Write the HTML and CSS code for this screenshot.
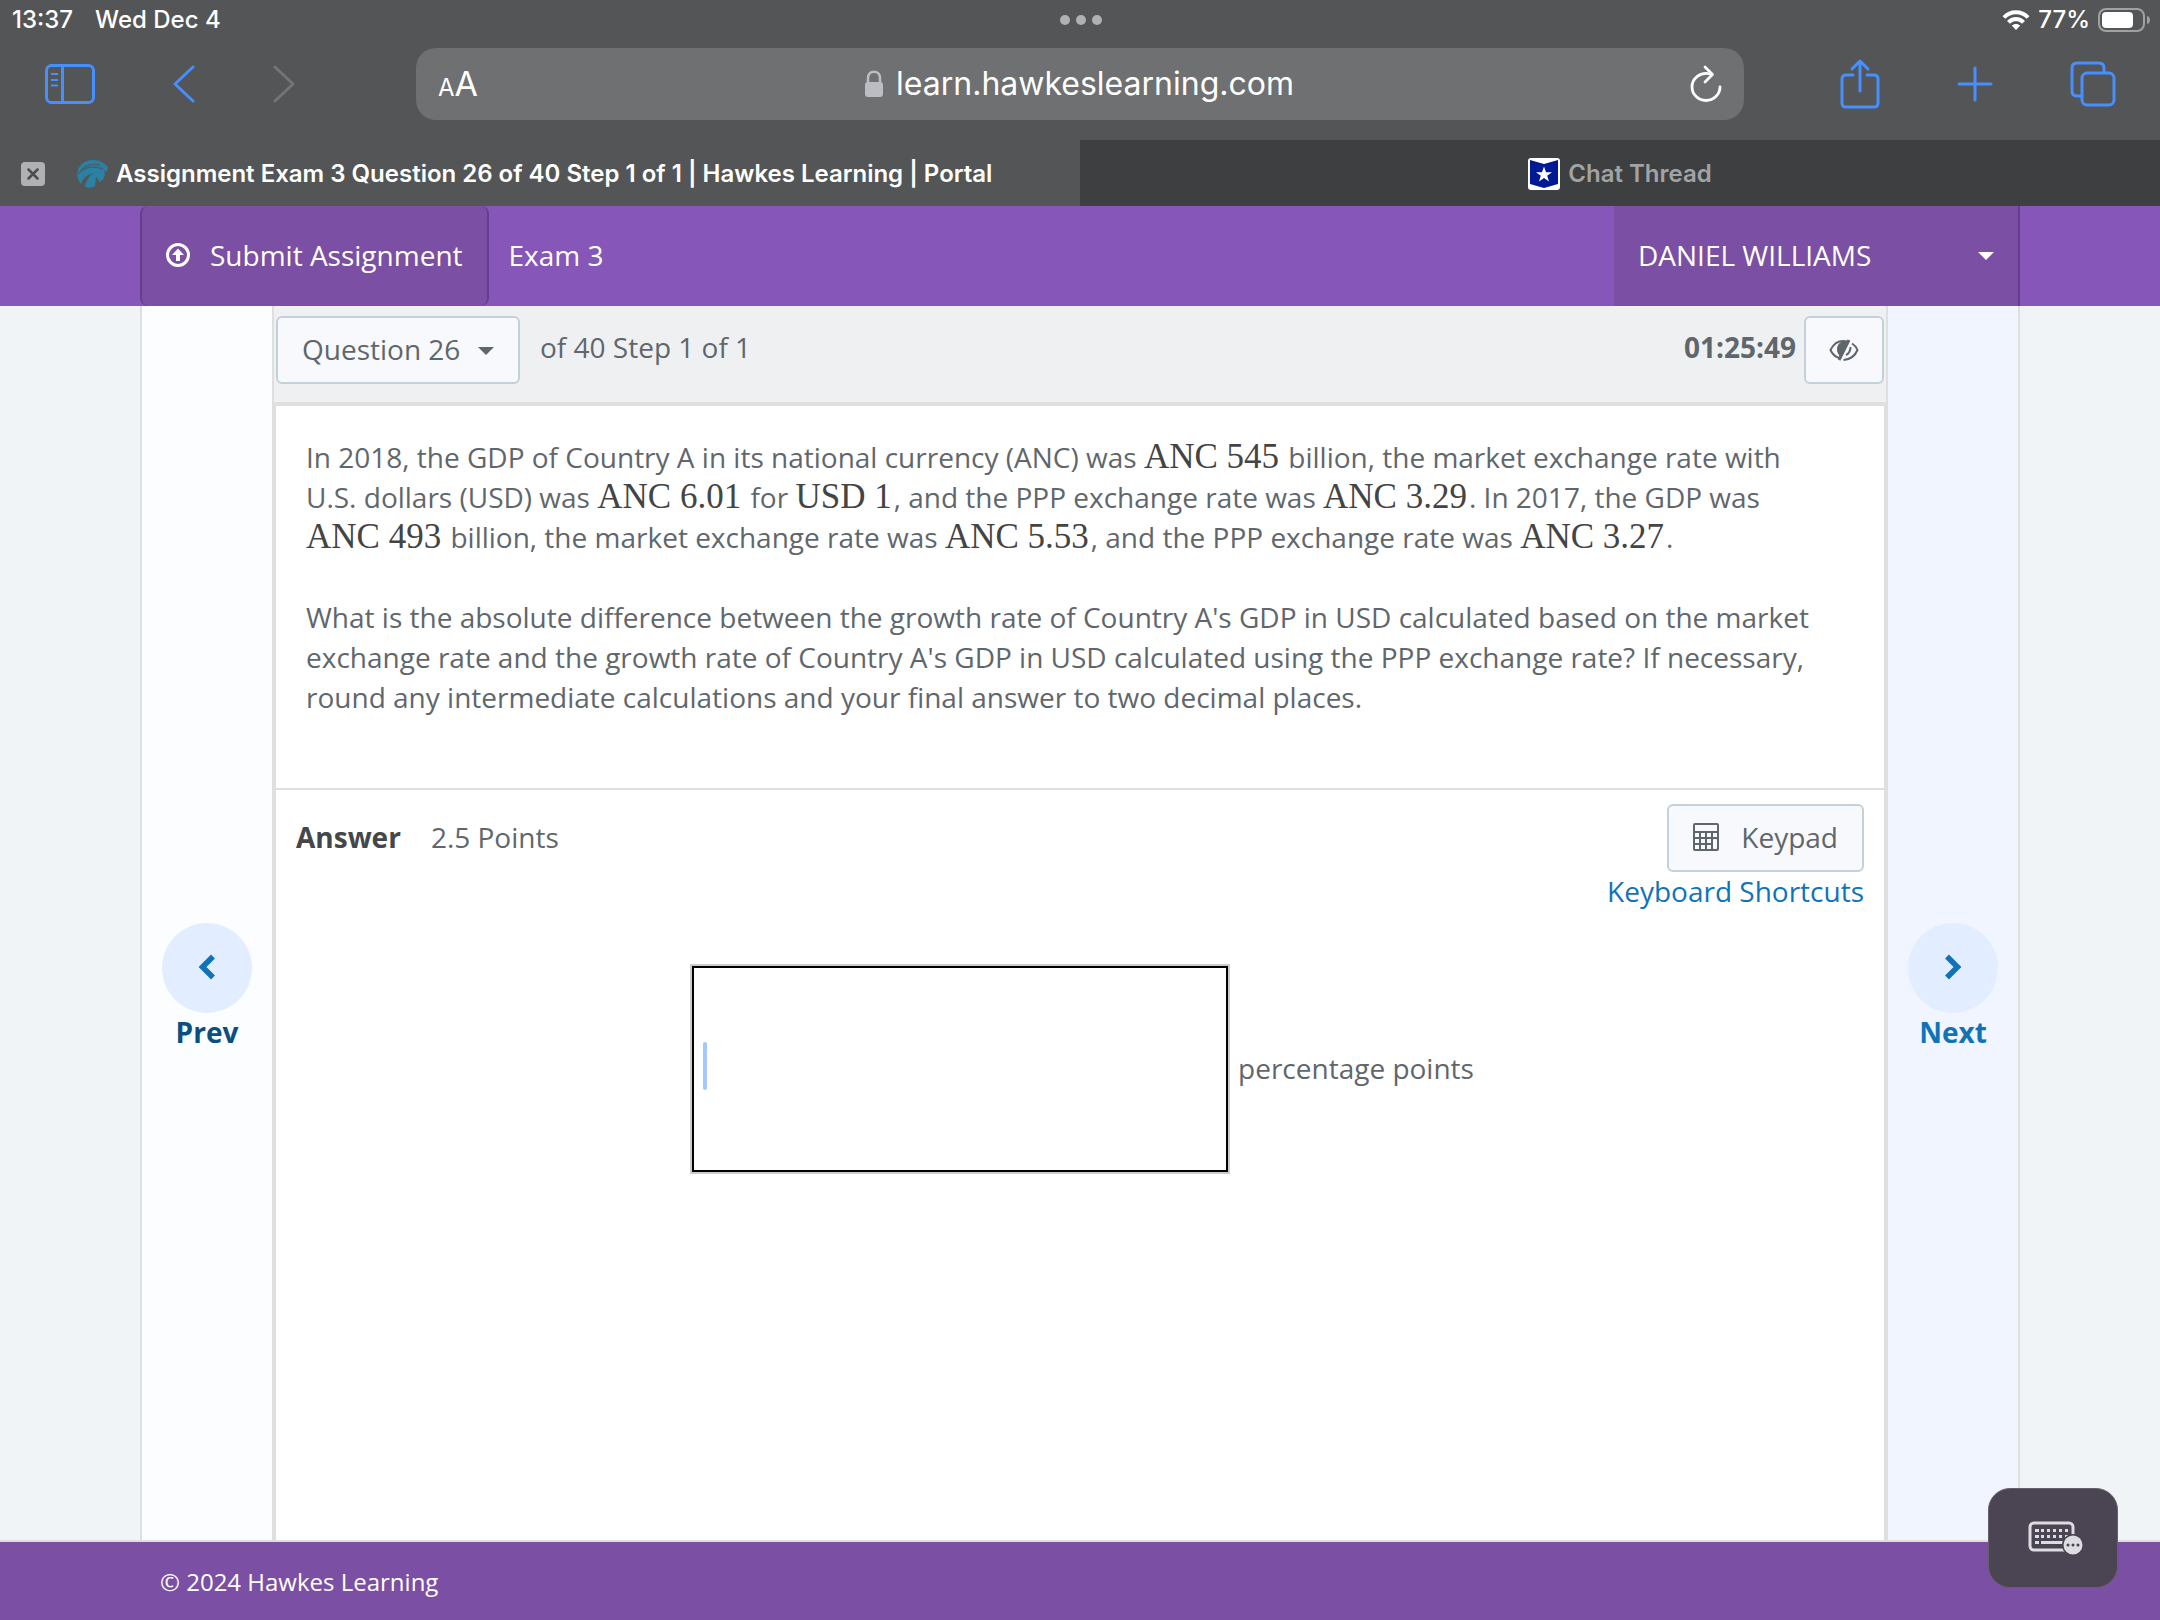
FILE: index.html
```
<!DOCTYPE html>
<html lang="en">
<head>
	<meta charset="UTF-8">
	<title>Assignment Exam 3 Question 26 of 40 Step 1 of 1 | Hawkes Learning | Portal</title>
	<link rel="stylesheet" href="styles.css">
</head>
<body>

	<!-- browser bar -->
	<div class="browser">
		<div class="status">
			<div class="status-left"><span>13:37</span><span>Wed Dec 4</span></div>
			<div class="dots"><i></i><i></i><i></i></div>
			<div class="status-right">
				<svg width="28" height="20" viewBox="0 0 28 20" fill="none" stroke="#fff" stroke-width="4"><path d="M2 7.5C8.500 0.500 19.500 0.500 26 7.500M6.500 12.300C10.500 8 17.500 8 21.500 12.300"/><path d="M14 20L9.800 15.600C12 13.500 16 13.500 18.200 15.600Z" fill="#fff" stroke="none"/></svg>
				<span>77%</span>
				<svg width="52" height="24" viewBox="0 0 52 24"><rect x="1" y="1" width="45" height="22" rx="7" fill="none" stroke="#a0a1a2" stroke-width="2"/><rect x="4" y="4" width="31" height="16" rx="4" fill="#fff"/><path d="M49 8C53 9 53 15 49 16Z" fill="#a0a1a2"/></svg>
			</div>
		</div>

		<div class="toolbar">
			<div class="tools tools-left">
				<button class="tool" aria-label="Sidebar"><svg width="50" height="40" viewBox="0 0 50 40" fill="none" stroke="#468ffd" stroke-width="3"><rect x="1.500" y="1.500" width="47" height="37" rx="5"/><path d="M17.500 2V38"/><path d="M6 10H13M6 16H13M6 21.500H13" stroke-width="2"/></svg></button>
				<button class="tool" aria-label="Back"><svg width="22" height="38" viewBox="0 0 22 38" fill="none" stroke="#468ffd" stroke-width="3" stroke-linecap="round" stroke-linejoin="round"><path d="M20 2L2 19L20 36"/></svg></button>
				<button class="tool" aria-label="Forward"><svg width="22" height="38" viewBox="0 0 22 38" fill="none" stroke="#737475" stroke-width="3" stroke-linecap="round" stroke-linejoin="round"><path d="M2 2L20 19L2 36"/></svg></button>
			</div>
			<div class="address">
				<button class="reader" aria-label="Page settings"><small>A</small>A</button>
				<div class="url">
					<svg width="20" height="28" viewBox="0 0 20 28"><path d="M4 13V8C4 -0.500 16 -0.500 16 8V13" fill="none" stroke="#bcbcc4" stroke-width="2.500"/><rect x="1" y="12" width="18" height="15" rx="3" fill="#bcbcc4"/></svg>
					<input type="text" value="learn.hawkeslearning.com" aria-label="Address">
				</div>
				<button class="tool" aria-label="Reload"><svg width="32" height="38" viewBox="0 0 32 38" fill="none" stroke="#fff" stroke-width="2.800" stroke-linecap="round" stroke-linejoin="round"><path d="M20.500 9C10 6.500 2 13.500 2 22C2 29.500 8.500 35.500 16 35.500C23.500 35.500 30 29.500 30 22"/><path d="M15 2L22.500 9.500L15 17"/></svg></button>
			</div>
			<div class="tools tools-right">
				<button class="tool" aria-label="Share"><svg width="40" height="50" viewBox="0 0 40 50" fill="none" stroke="#468ffd" stroke-width="3" stroke-linecap="round" stroke-linejoin="round"><path d="M13 16H6Q2 16 2 20V44Q2 48 6 48H34Q38 48 38 44V20Q38 16 34 16H27M20 32V2M12 10L20 2L28 10"/></svg></button>
				<button class="tool" aria-label="New tab"><svg width="36" height="36" viewBox="0 0 36 36" stroke="#468ffd" stroke-width="3" stroke-linecap="round"><path d="M18 2V34M2 18H34"/></svg></button>
				<button class="tool" aria-label="Show tabs"><svg width="46" height="46" viewBox="0 0 46 46" fill="none" stroke="#468ffd" stroke-width="3"><rect x="12" y="12" width="32" height="32" rx="5"/><path d="M12 35H7Q2 35 2 30V7Q2 2 7 2H29Q34 2 34 7V12"/></svg></button>
			</div>
		</div>

		<div class="tabs">
			<div class="tab tab-cur">
				<button class="close" aria-label="Close tab"><svg width="12" height="12" viewBox="0 0 12 12" stroke="#4b4c4d" stroke-width="2.500" stroke-linecap="round"><path d="M1.500 1.500L10.500 10.500M10.500 1.500L1.500 10.500"/></svg></button>
				<svg width="32" height="30" viewBox="0 0 32 30"><path d="M3 22C-2 12 5 1 17 1C24 1 28 4 32 8L31 13L28 11C30 16 28 21 24 23L20 18L19 27C16 29 12 29 9 28C10 22 13 17 17 14C10 16 6 21 5 25Z" fill="#2a80a5"/><path d="M2 15C8 8 18 6 27 10M5 11C11 5 17 4 24 6" fill="none" stroke="#45616c" stroke-width="1.500"/></svg>
				<a href="#">Assignment Exam 3 Question 26 of 40 Step 1 of 1 | Hawkes Learning | Portal</a>
			</div>
			<div class="tab">
				<svg width="32" height="32" viewBox="0 0 32 32"><rect width="32" height="32" rx="3" fill="#fff"/><path d="M2 2L16 6L30 2V26L16 30L2 26Z" fill="#001a96"/><path d="M16 8.500L18 14.200H24L19.200 17.700L21 23.500L16 20L11 23.500L12.800 17.700L8 14.200H14Z" fill="#fff"/></svg>
				<a href="#">Chat Thread</a>
			</div>
		</div>
	</div>

	<header class="header">
		<button class="submit">
			<svg width="24" height="24" viewBox="0 0 24 24"><circle cx="12" cy="12" r="10.500" fill="none" stroke="#fff" stroke-width="3"/><path d="M12 5.500L18 12H14V18H10V12H6Z" fill="#fff"/></svg>
			Submit Assignment
		</button>
		<span class="exam">Exam 3</span>
		<button class="user">DANIEL WILLIAMS <span class="caret"></span></button>
	</header>

	<div class="wrap">
		<nav class="side side-prev">
			<button class="step"><span class="circle"><svg width="18" height="26" viewBox="0 0 18 26" fill="none" stroke="#1173b7" stroke-width="5.500" stroke-linejoin="miter"><path d="M15 2.500L4.500 13L15 23.500"/></svg></span>Prev</button>
		</nav>

		<main class="main">
			<div class="question-bar">
				<div class="picker">
					<select aria-label="Question"><option>Question 26</option></select>
					<span class="caret"></span>
				</div>
				<span class="step-text">of 40 Step 1 of 1</span>
				<b class="timer">01:25:49</b>
				<button class="btn btn-eye" aria-label="Hide timer"><svg width="30" height="26" viewBox="0 0 30 26" fill="none" stroke="#5f676c" stroke-width="2"><path d="M10 21C6 19.500 3 16.500 1.500 13C5 6 11 3 18 4.500M23 6.500C25.500 8 27.500 10.500 28.500 13C26 19 21 22.500 14.500 23"/><path d="M20 3L10 23" stroke-width="3"/><path d="M17 5C9 5 7 12 11 18L17 5Z" fill="#5f676c"/><path d="M17 18C20 16.500 21.500 14 21.500 10"/></svg></button>
			</div>

			<div class="card">
				<section class="question">
					<p>In 2018, the GDP of Country A in its national currency (ANC) was <span class="math">ANC 545</span> billion, the market exchange rate with U.S. dollars (USD) was <span class="math">ANC 6.01</span> for <span class="math">USD 1</span>, and the PPP exchange rate was <span class="math">ANC 3.29</span>. In 2017, the GDP was <span class="math">ANC 493</span> billion, the market exchange rate was <span class="math">ANC 5.53</span>, and the PPP exchange rate was <span class="math">ANC 3.27</span>.</p>
					<p>What is the absolute difference between the growth rate of Country A's GDP in USD calculated based on the market exchange rate and the growth rate of Country A's GDP in USD calculated using the PPP exchange rate? If necessary, round any intermediate calculations and your final answer to two decimal places.</p>
				</section>
				<section class="answer">
					<div class="answer-head">
						<div class="points"><b>Answer</b><span>2.5 Points</span></div>
						<div class="keys">
							<button class="btn btn-keypad">
								<svg width="26" height="28" viewBox="0 0 26 28"><rect width="26" height="28" rx="2" fill="#5f676c"/><g fill="#f8f9fc"><rect x="2" y="2" width="22" height="6"/><path d="M2 10h4v4h-4zM8 10h4v4h-4zM14 10h4v4h-4zM20 10h4v4h-4zM2 16h4v4h-4zM8 16h4v4h-4zM14 16h4v4h-4zM2 22h4v4h-4zM8 22h4v4h-4zM14 22h4v4h-4z"/><rect x="20" y="16" width="4" height="10" rx="1"/></g></svg>
								Keypad
							</button>
							<a href="#">Keyboard Shortcuts</a>
						</div>
					</div>
					<div class="answer-row">
						<div class="field">
							<input type="text" id="answer">
							<span class="cursor"></span>
						</div>
						<label for="answer">percentage points</label>
					</div>
				</section>
			</div>
		</main>

		<nav class="side side-next">
			<button class="step"><span class="circle"><svg width="18" height="26" viewBox="0 0 18 26" fill="none" stroke="#1173b7" stroke-width="5.500" stroke-linejoin="miter"><path d="M3 2.500L13.500 13L3 23.500"/></svg></span>Next</button>
		</nav>
	</div>

	<footer class="footer">© 2024 Hawkes Learning</footer>

	<button class="keyboard" aria-label="Keyboard">
		<svg width="56" height="36" viewBox="0 0 56 36"><rect x="2" y="3" width="43" height="27" rx="4" fill="none" stroke="#dddce0" stroke-width="3"/><path d="M7 9h4v3h-4zM13 9h3v3h-3zM19 9h3v3h-3zM25 9h3v3h-3zM31 9h3v3h-3zM37 9h3v3h-3zM7 15h4v3h-4zM13 15h3v3h-3zM19 15h3v3h-3zM25 15h3v3h-3zM31 15h3v3h-3zM37 15h3v3h-3zM7 21h4v3h-4zM13 21h22v3h-22z" fill="#dddce0"/><circle cx="45" cy="25" r="11" fill="#4a4352"/><circle cx="45" cy="25" r="9.500" fill="#dddce0"/><g fill="#4a4352"><circle cx="40" cy="25" r="1.500"/><circle cx="45" cy="25" r="1.500"/><circle cx="50" cy="25" r="1.500"/></g></svg>
	</button>

</body>
</html>
```
FILE: styles.css
```
*{
	box-sizing: border-box;
}
body{
	margin: 0;
	min-height: 100vh;
	display: flex;
	flex-direction: column;
	background-color: #f0f4f7;
	font-family: "Open Sans","Noto Sans",sans-serif;
	font-size: 28px;
	line-height: 40px;
	color: #5f676c;
}
button,input,select{
	margin: 0;
	padding: 0;
	border: none;
	outline: none;
	background: none;
	font: inherit;
	color: inherit;
}
button{
	cursor: pointer;
}
a{
	text-decoration: none;
	color: #1173b7;
}
svg{
	display: block;
	flex: none;
}

/* browser bar */
.browser{
	background-color: #545556;
	color: #fff;
	font-family: Inter,"Liberation Sans",sans-serif;
}
.status{
	display: grid;
	grid-template-columns: 1fr auto 1fr;
	align-items: center;
	height: 40px;
	padding: 0 10px 0 12px;
	font-size: 24px;
	font-weight: 500;
}
.status-left,.status-right{
	display: flex;
	align-items: center;
}
.status-left{
	gap: 22px;
}
.status-right{
	justify-content: flex-end;
	gap: 8px;
}
.dots{
	display: flex;
	gap: 6px;
}
.dots i{
	width: 10px;
	height: 10px;
	border-radius: 50%;
	background-color: #b0b1b2;
}
.toolbar{
	display: grid;
	grid-template-columns: 416px 1fr 416px;
	align-items: center;
	height: 100px;
	padding-bottom: 12px;
}
.tools{
	display: flex;
	align-items: center;
}
.tools-left{
	gap: 78px;
	padding-left: 45px;
}
.tools-right{
	justify-content: space-between;
	padding: 0 44px 0 96px;
}
.address{
	display: flex;
	align-items: center;
	justify-content: space-between;
	height: 72px;
	padding: 0 22px;
	border-radius: 20px;
	background-color: #6f7071;
}
.reader{
	padding-top: 4px;
	font-size: 34px;
}
.reader small{
	font-size: 24px;
}
.url{
	display: flex;
	align-items: center;
	gap: 12px;
	font-size: 32px;
}
.url input{
	width: 408px;
}
.tabs{
	display: grid;
	grid-template-columns: 1fr 1fr;
	height: 66px;
}
.tab{
	display: flex;
	align-items: center;
	justify-content: center;
	gap: 8px;
	padding-top: 2px;
	background-color: #3e3f40;
	font-size: 24px;
	font-weight: 600;
}
.tab a{
	color: #a2a3a4;
}
.tab-cur{
	justify-content: flex-start;
	padding-left: 21px;
	background-color: #545556;
}
.tab-cur a{
	color: #fff;
}
.close{
	display: flex;
	align-items: center;
	justify-content: center;
	width: 24px;
	height: 24px;
	margin-right: 23px;
	border-radius: 4px;
	background-color: #b0b1b2;
}

/* header */
.header{
	display: flex;
	align-items: center;
	height: 100px;
	padding: 0 140px;
	background-color: #8656b8;
	color: #fff;
}
.submit{
	display: flex;
	align-items: center;
	gap: 20px;
	height: 100%;
	padding: 0 24px 2px;
	border: 2px solid #643f87;
	border-top: none;
	border-bottom: none;
	border-radius: 8px;
	background-color: #7b4fa3;
}
.exam{
	margin-left: 20px;
	padding-bottom: 2px;
}
.user{
	display: flex;
	align-items: center;
	justify-content: space-between;
	width: 406px;
	height: 100%;
	margin-left: auto;
	padding: 0 24px 2px;
	border-right: 2px solid #643f87;
	background-color: #7b4fa3;
}
.caret{
	margin-top: 2px;
	border-top: 8px solid;
	border-left: 8px solid transparent;
	border-right: 8px solid transparent;
}

/* page */
.wrap{
	flex: 1;
	display: flex;
	padding: 0 140px;
}
.side{
	display: flex;
	align-items: center;
	justify-content: center;
	width: 132px;
}
.side-prev{
	border-left: 2px solid #dfdfdf;
	background-color: #fcfdff;
}
.side-next{
	border-right: 2px solid #dfdfdf;
	background-color: #f1f5ff;
}
.step{
	display: flex;
	flex-direction: column;
	align-items: center;
	padding-top: 128px;
	font-weight: bold;
	line-height: 38px;
	color: #1173b7;
}
.side-prev .step{
	color: #0b4f7d;
}
.circle{
	display: flex;
	align-items: center;
	justify-content: center;
	width: 90px;
	height: 90px;
	padding-bottom: 2px;
	border-radius: 50%;
	background-color: #e2eeff;
}
.main{
	flex: 1;
	display: flex;
	flex-direction: column;
}
.question-bar{
	display: flex;
	align-items: flex-start;
	height: 96px;
	padding: 10px 2px 0;
	border-left: 2px solid #dfdfdf;
	border-right: 2px solid #dfdfdf;
	background-color: #eff0f2;
}
.btn,.picker{
	display: flex;
	align-items: center;
	justify-content: center;
	height: 68px;
	border: 2px solid #c3d2da;
	border-radius: 6px;
	background-color: #f8f9fc;
}
.picker{
	position: relative;
	width: 244px;
}
.picker select{
	width: 100%;
	height: 100%;
	padding: 0 0 2px 24px;
	appearance: none;
}
.picker .caret{
	position: absolute;
	right: 24px;
	pointer-events: none;
}
.step-text{
	margin-left: 20px;
	line-height: 62px;
}
.timer{
	margin-left: auto;
	margin-right: 8px;
	line-height: 62px;
}
.btn-eye{
	width: 80px;
}
.card{
	flex: 1;
	border: 4px solid #dfdfdf;
	border-bottom: none;
	background-color: #fff;
}
.question{
	padding: 31px 60px 31px 30px;
	border-bottom: 2px solid #dfdfdf;
}
.question p{
	margin: 0 0 40px;
}
.math{
	margin-right: 2px;
	font-family: "Liberation Serif",serif;
	font-size: 35px;
	line-height: 36px;
	white-space: nowrap;
	color: #444;
}
.answer{
	padding: 14px 20px 40px;
}
.answer-head{
	display: flex;
	justify-content: space-between;
}
.points{
	display: flex;
	gap: 30px;
	line-height: 66px;
}
.points b{
	color: #43474a;
}
.keys{
	display: flex;
	flex-direction: column;
	align-items: flex-end;
	line-height: 38px;
}
.btn-keypad{
	gap: 22px;
	padding: 0 24px 2px;
}
.answer-row{
	display: flex;
	align-items: center;
	justify-content: center;
	gap: 8px;
	margin-top: 54px;
	padding-left: 4px;
}
.answer-row label{
	padding-bottom: 2px;
}
.field{
	position: relative;
	width: 540px;
}
.field input{
	display: block;
	width: 100%;
	height: 210px;
	padding: 0 12px;
	border: 2px solid #ccc;
	box-shadow: inset 0 0 0 2px #000;
}
.cursor{
	position: absolute;
	left: 13px;
	top: 78px;
	width: 4px;
	height: 48px;
	border-radius: 2px;
	background-color: #a3c7ff;
}

.footer{
	height: 80px;
	padding: 20px 160px 0;
	border-top: 2px solid #dfdfdf;
	background-color: #7b4fa3;
	font-size: 24px;
	color: #fff;
}
.keyboard{
	position: fixed;
	right: 42px;
	bottom: 32px;
	display: flex;
	align-items: center;
	justify-content: center;
	width: 130px;
	height: 100px;
	padding-left: 6px;
	border: 1px solid #66606c;
	border-radius: 22px;
	background-color: #4b4553;
}
```
